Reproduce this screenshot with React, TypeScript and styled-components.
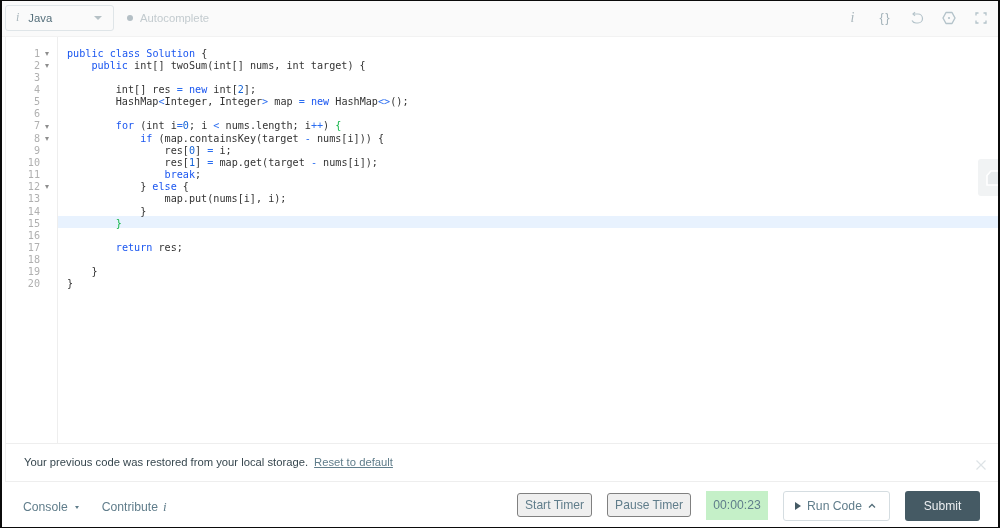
import React from "react";
import styled, { createGlobalStyle } from "styled-components";

const GlobalStyle = createGlobalStyle`
  html, body {
    margin: 0;
    padding: 0;
    background: #fff;
    font-family: "Liberation Sans", Arial, sans-serif;
  }
`;

const Frame = styled.div`
  position: relative;
  box-sizing: border-box;
  width: 1000px;
  height: 528px;
  display: flex;
  flex-direction: column;
  border-style: solid;
  border-color: #0b0b0b;
  border-width: 1px 2px 1px 2px;
  overflow: hidden;
  will-change: transform;
`;

const Toolbar = styled.div`
  flex: none;
  height: 36px;
  display: flex;
  align-items: center;
  justify-content: space-between;
  background: #fafafa;
  border-bottom: 1px solid #f2f2f2;
  padding: 0 9.5px 2px 3px;
  box-sizing: border-box;
`;

const ToolbarLeft = styled.div`
  display: flex;
  align-items: center;
`;

const LangSelect = styled.div`
  box-sizing: border-box;
  width: 109px;
  height: 26px;
  display: flex;
  align-items: center;
  border: 1px solid #dfe5e8;
  border-radius: 3px;
  background: #fafafa;
  padding: 0 11px 0 10px;
  font-size: 11.3px;
  color: #546e7a;
`;

const InfoMark = styled.i<{ $size?: number; $color?: string }>`
  font-family: "Liberation Serif", serif;
  font-style: italic;
  font-size: ${(p) => p.$size ?? 12}px;
  color: ${(p) => p.$color ?? "#a9b6bc"};
`;

const LangName = styled.span`
  margin-left: 9px;
  flex: 1;
`;

const Caret = styled.span`
  width: 0;
  height: 0;
  border-left: 4px solid transparent;
  border-right: 4px solid transparent;
  border-top: 4px solid #b6c1c6;
`;

const Autocomplete = styled.div`
  display: flex;
  align-items: center;
  margin-left: 13px;
  font-size: 11.3px;
  color: #c3cbcf;
`;

const Dot = styled.span`
  width: 6px;
  height: 6px;
  border-radius: 50%;
  background: #b4bfc5;
  margin-right: 7px;
`;

const ToolIcons = styled.div`
  display: flex;
  align-items: center;
  gap: 16px;
  color: #b4c3ca;
`;

const ToolIcon = styled.span`
  width: 16px;
  height: 16px;
  display: flex;
  align-items: center;
  justify-content: center;
`;

const Braces = styled.span`
  font-family: "Liberation Sans", sans-serif;
  font-size: 13px;
  color: #a5b4bb;
  letter-spacing: 1.5px;
  margin-right: -1.5px;
`;

const Editor = styled.div`
  flex: 1;
  display: flex;
  min-height: 0;
  margin-left: 3px;
  border-left: 1px solid #f0f0f0;
  font-family: "DejaVu Sans Mono", monospace;
  font-size: 10.14px;
  line-height: 12.16px;
`;

const Gutter = styled.div`
  flex: none;
  width: 52px;
  box-sizing: border-box;
  padding-top: 10.52px;
  border-right: 1px solid #eeeeee;
  color: #b0b0b0;
`;

const GutterRow = styled.div`
  height: 12.16px;
  display: flex;
  align-items: center;
  justify-content: flex-end;
`;

const LineNo = styled.span`
  display: block;
  text-align: right;
`;

const FoldSlot = styled.span`
  flex: none;
  width: 17px;
  display: flex;
  justify-content: center;
  padding-right: 4px;
  box-sizing: border-box;
`;

const FoldArrow = styled.span`
  width: 0;
  height: 0;
  border-left: 2.5px solid transparent;
  border-right: 2.5px solid transparent;
  border-top: 4px solid #8e8e8e;
`;

const Code = styled.div`
  flex: 1;
  padding-top: 8.76px;
  min-width: 0;
`;

const CodeLine = styled.div<{ $active?: boolean }>`
  box-sizing: border-box;
  height: 12.16px;
  padding: 1.76px 0 0 9px;
  white-space: pre;
  color: #333;
  background: ${(p) => (p.$active ? "#e8f2fe" : "transparent")};
`;

const Tok = styled.span<{ $k: string }>`
  color: ${(p) =>
    p.$k === "k"
      ? "#1a56f0"
      : p.$k === "n"
        ? "#1565d8"
        : p.$k === "o"
          ? "#2a6df0"
          : "#12b548"};
`;

const SideTab = styled.div`
  position: absolute;
  right: 0;
  top: 158px;
  width: 20px;
  height: 37px;
  display: flex;
  align-items: center;
  padding-left: 8px;
  box-sizing: border-box;
  background: #f1f3f4;
  border-radius: 3px 0 0 3px;
`;

const Notice = styled.div`
  flex: none;
  position: relative;
  box-sizing: border-box;
  height: 39px;
  margin-left: 3px;
  padding: 0 0 2px 18px;
  display: flex;
  align-items: center;
  border-left: 1px solid #f0f0f0;
  border-top: 1px solid #eeeeee;
  border-bottom: 1px solid #eeeeee;
  font-size: 11.26px;
  color: #37474f;
`;

const ResetLink = styled.span`
  margin-left: 6px;
  color: #607d8b;
  text-decoration: underline;
`;

const CloseMark = styled.span`
  position: absolute;
  right: 11px;
  top: 15px;
  display: flex;
`;

const Footer = styled.div`
  flex: none;
  height: 45px;
  box-sizing: border-box;
  padding: 2px 18px 0 21px;
  display: flex;
  align-items: center;
  justify-content: space-between;
  color: #607d8b;
  font-size: 12.2px;
`;

const FooterLeft = styled.div`
  display: flex;
  align-items: center;
  gap: 23px;
  padding-top: 3px;
`;

const FooterLink = styled.span`
  display: flex;
  align-items: center;
  gap: 5px;
`;

const SmallCaret = styled.span`
  width: 0;
  height: 0;
  margin-left: 2px;
  border-left: 2.5px solid transparent;
  border-right: 2.5px solid transparent;
  border-top: 3px solid #607d8b;
`;

const FooterRight = styled.div`
  display: flex;
  align-items: center;
`;

const TimerButton = styled.button`
  box-sizing: border-box;
  height: 24px;
  margin: 0 15px 2px 0;
  padding: 0 7px;
  border: 1px solid #808080;
  border-radius: 3px;
  background: #efefef;
  color: #607d8b;
  font-family: inherit;
  font-size: 12.1px;
`;

const Clock = styled.div`
  box-sizing: border-box;
  width: 62px;
  height: 29px;
  margin: 0 15px 1px 0;
  display: flex;
  align-items: center;
  justify-content: center;
  background: #c5f0c8;
  color: #607d8b;
  font-size: 12.2px;
`;

const RunButton = styled.div`
  box-sizing: border-box;
  width: 107px;
  height: 30px;
  padding-right: 2px;
  display: flex;
  align-items: center;
  justify-content: center;
  gap: 6px;
  margin-right: 15px;
  border: 1px solid #d5dde1;
  border-radius: 3px;
  background: #fff;
  color: #607d8b;
  font-size: 12.2px;
`;

const SubmitButton = styled.div`
  box-sizing: border-box;
  width: 75px;
  height: 30px;
  display: flex;
  align-items: center;
  justify-content: center;
  border-radius: 3px;
  background: #455a64;
  color: #eceff1;
  font-size: 12.1px;
`;

type Part = string | [string, string];

const code: Part[][] = [
  [["k", "public"], " ", ["k", "class"], " ", ["k", "Solution"], " {"],
  ["    ", ["k", "public"], " int[] twoSum(int[] nums, int target) {"],
  [],
  ["        int[] res ", ["o", "="], " ", ["k", "new"], " int[", ["n", "2"], "];"],
  ["        HashMap", ["o", "<"], "Integer, Integer", ["o", ">"], " map ", ["o", "="], " ", ["k", "new"], " HashMap", ["o", "<>"], "();"],
  [],
  ["        ", ["k", "for"], " (int i", ["o", "="], ["n", "0"], "; i ", ["o", "<"], " nums.length; i", ["o", "++"], ") ", ["b", "{"]],
  ["            ", ["k", "if"], " (map.containsKey(target ", ["o", "-"], " nums[i])) {"],
  ["                res[", ["n", "0"], "] ", ["o", "="], " i;"],
  ["                res[", ["n", "1"], "] ", ["o", "="], " map.get(target ", ["o", "-"], " nums[i]);"],
  ["                ", ["k", "break"], ";"],
  ["            } ", ["k", "else"], " {"],
  ["                map.put(nums[i], i);"],
  ["            }"],
  ["        ", ["b", "}"]],
  [],
  ["        ", ["k", "return"], " res;"],
  [],
  ["    }"],
  ["}"],
];

const foldable = [1, 2, 7, 8, 12];

export default function App() {
  return (
    <>
      <GlobalStyle />
      <Frame>
        <Toolbar>
          <ToolbarLeft>
            <LangSelect>
              <InfoMark>i</InfoMark>
              <LangName>Java</LangName>
              <Caret />
            </LangSelect>
            <Autocomplete>
              <Dot />
              Autocomplete
            </Autocomplete>
          </ToolbarLeft>
          <ToolIcons>
            <ToolIcon>
              <InfoMark $size={14}>i</InfoMark>
            </ToolIcon>
            <ToolIcon>
              <Braces>{"{}"}</Braces>
            </ToolIcon>
            <ToolIcon>
              <svg width="14" height="14" viewBox="0 0 14 14" fill="none" stroke="currentColor" strokeWidth="1.2">
                <path d="M3.5 3H8a4.5 4.5 0 0 1 0 9H6a4.5 4.5 0 0 1-4-2.5" />
                <path d="M5 1.2L3 3l2 1.8" />
              </svg>
            </ToolIcon>
            <ToolIcon>
              <svg width="14" height="14" viewBox="0 0 14 14" fill="none" stroke="currentColor" strokeWidth="1.4">
                <path d="M4 1.5h6L13 7l-3 5.5H4L1 7z" strokeLinejoin="round" />
                <circle cx="7" cy="7" r="1.1" fill="currentColor" stroke="none" />
              </svg>
            </ToolIcon>
            <ToolIcon>
              <svg width="12" height="12" viewBox="0 0 12 12" fill="none" stroke="currentColor" strokeWidth="1.3">
                <path d="M1 3.5V1h2.5M8.5 1H11v2.5M11 8.5V11H8.5M3.5 11H1V8.5" />
              </svg>
            </ToolIcon>
          </ToolIcons>
        </Toolbar>
        <Editor>
          <Gutter>
            {code.map((_, i) => (
              <GutterRow key={i}>
                <LineNo>{i + 1}</LineNo>
                <FoldSlot>{foldable.includes(i + 1) && <FoldArrow />}</FoldSlot>
              </GutterRow>
            ))}
          </Gutter>
          <Code>
            {code.map((parts, i) => (
              <CodeLine key={i} $active={i === 14}>
                {parts.map((p, j) =>
                  typeof p === "string" ? p : <Tok key={j} $k={p[0]}>{p[1]}</Tok>
                )}
              </CodeLine>
            ))}
          </Code>
        </Editor>
        <SideTab>
          <svg width="12" height="16" viewBox="0 0 12 16" fill="#e8ebed" stroke="#ffffff" strokeWidth="1.6">
            <path d="M1 5.5L5 1h8v14H1z" />
          </svg>
        </SideTab>
        <Notice>
          Your previous code was restored from your local storage.
          <ResetLink>Reset to default</ResetLink>
          <CloseMark>
            <svg width="12" height="12" viewBox="0 0 12 12" stroke="#dde3e6" strokeWidth="1.2">
              <path d="M1.5 1.5l9 9M10.5 1.5l-9 9" />
            </svg>
          </CloseMark>
        </Notice>
        <Footer>
          <FooterLeft>
            <FooterLink>
              Console
              <SmallCaret />
            </FooterLink>
            <FooterLink>
              Contribute
              <InfoMark $size={13} $color="#607d8b">i</InfoMark>
            </FooterLink>
          </FooterLeft>
          <FooterRight>
            <TimerButton>Start Timer</TimerButton>
            <TimerButton>Pause Timer</TimerButton>
            <Clock>00:00:23</Clock>
            <RunButton>
              <svg width="6" height="8" viewBox="0 0 6 8" fill="#455a64">
                <path d="M0 0l6 4-6 4z" />
              </svg>
              Run Code
              <svg width="8" height="6" viewBox="0 0 8 6" fill="none" stroke="#546e7a" strokeWidth="1.3">
                <path d="M1 4.5l3-3 3 3" />
              </svg>
            </RunButton>
            <SubmitButton>Submit</SubmitButton>
          </FooterRight>
        </Footer>
      </Frame>
    </>
  );
}
